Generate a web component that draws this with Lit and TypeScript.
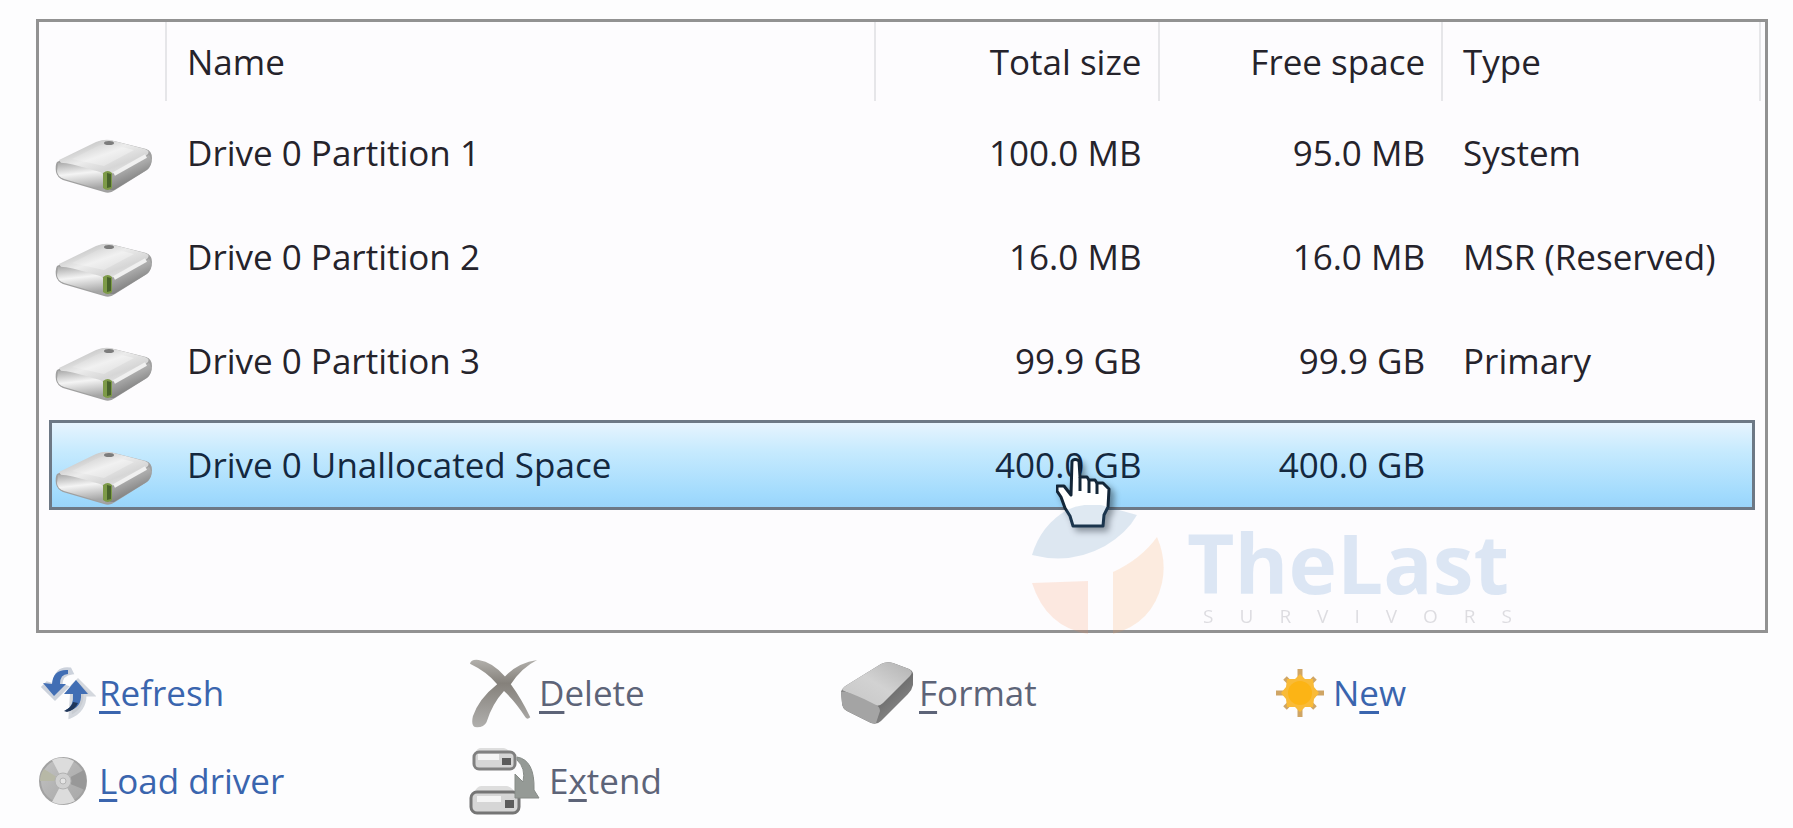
import { LitElement, html, css, svg, nothing } from "lit";
import { customElement, property } from "lit/decorators.js";

interface Partition {
  name: string;
  total: string;
  free: string;
  type: string;
  selected?: boolean;
}

const PARTITIONS: Partition[] = [
  { name: "Drive 0 Partition 1", total: "100.0 MB", free: "95.0 MB", type: "System" },
  { name: "Drive 0 Partition 2", total: "16.0 MB", free: "16.0 MB", type: "MSR (Reserved)" },
  { name: "Drive 0 Partition 3", total: "99.9 GB", free: "99.9 GB", type: "Primary" },
  { name: "Drive 0 Unallocated Space", total: "400.0 GB", free: "400.0 GB", type: "", selected: true },
];

const driveIcon = html`<svg class="drive" viewBox="0 0 100 56" width="100" height="56" aria-hidden="true">
  <defs>
    <linearGradient id="top" x1="0" y1="0" x2="1" y2="1">
      <stop offset="0" stop-color="#a9a9a9" /><stop offset=".45" stop-color="#ececec" />
      <stop offset=".7" stop-color="#d6d6d6" /><stop offset="1" stop-color="#f2f2f2" />
    </linearGradient>
    <linearGradient id="plate" x1="0" y1="0" x2="1" y2="1">
      <stop offset="0" stop-color="#c6c6c6" /><stop offset=".5" stop-color="#f1f1f1" /><stop offset="1" stop-color="#dadada" />
    </linearGradient>
    <linearGradient id="front" x1="0" y1="0" x2=".2" y2="1">
      <stop offset="0" stop-color="#a9a9a9" /><stop offset=".45" stop-color="#f4f4f4" /><stop offset="1" stop-color="#a6a6a6" />
    </linearGradient>
    <linearGradient id="side" x1="0" y1="0" x2=".5" y2="1">
      <stop offset="0" stop-color="#d0d0d0" /><stop offset=".5" stop-color="#a8a8a8" /><stop offset="1" stop-color="#6f6f6f" />
    </linearGradient>
  </defs>
  <path d="M3 24 Q1 27 2 34 Q3 39 9 42 L50 54 Q56 56 61 52 L93 32 Q98 28 98 20 Q98 13 92 11 L60 3 Q52 1 44 4 Z" fill="#a0a0a0" />
  <path d="M5 22 L42 4 Q52 0 60 3 L91 11 Q97 13 93 17 L60 35 Q53 37 46 35 L7 25 Z" fill="url(#top)" />
  <path d="M18 21 L44 8 Q52 5 60 7 L80 12 L50 28 Z" fill="url(#plate)" />
  <path d="M4 25 Q10 23 46 34 Q53 37 53 45 L51 53 L10 41 Q3 38 3 33 Z" fill="url(#front)" />
  <path d="M59 37 L95 17 Q98 21 97 25 Q96 30 91 33 L60 52 L56 52 Z" fill="url(#side)" />
  <path d="M60 36 L92 18" stroke="#f0f0f0" stroke-width="4" fill="none" />
  <path d="M49 35 Q54 31 58 35 L58 50 Q54 54 49 50 Z" fill="#7d9a48" />
  <path d="M53 35 L57 36 L57 49 L53 50 Z" fill="#47632a" />
  <ellipse cx="55" cy="5" rx="5" ry="2" fill="#7c7c7c" />
</svg>`;

const handCursor = html`<svg class="cursor" viewBox="0 0 56 72" width="56" height="72" aria-hidden="true">
  <path d="M16 4 Q19 1 23 4 L24 20 L31 20 L33 23 L39 23 L41 26 L47 26 L53 32 L52 50 L48 58 L47 69 L17 69 L14 59 L9 51 L5 40 L1 34 L1 29 L8 29 L15 38 Z"
    fill="#fff" stroke="#132638" stroke-width="3" stroke-linejoin="round" />
  <path d="M24 20 V34 M33 22 V36 M41 25 V37" stroke="#132638" stroke-width="3" fill="none" />
</svg>`;

const logo = html`<svg class="mark" viewBox="0 0 134 130" width="134" height="130" aria-hidden="true">
  <path d="M1 50 Q10 20 36 5 Q50 -2 70 0 L106 10 Q96 28 74 41 Q40 60 1 50 Z" fill="#4682b4" />
  <path d="M126 32 Q136 55 131 78 Q122 118 82 129 L82 67 Q110 54 126 32 Z" fill="#fb9c4e" />
  <path d="M1 78 L57 76 L57 129 Q15 122 1 78 Z" fill="#f98a55" />
</svg>`;

const icons: Record<string, unknown> = {
  refresh: svg`<svg viewBox="0 0 56 56" width="56" height="56" aria-hidden="true">
    <path d="M30 4 Q15 2 14 20 L7 18 L3 22 L15 34 L27 22 L21 20 Q21 9 32 8 Z" fill="#ccd2dc" stroke="#ccd2dc" stroke-width="3" />
    <path d="M30 52 Q45 46 45 30 L53 30 L38 15 L32 21 Z" fill="#c8ccd2" stroke="#d4d8de" stroke-width="3" />
    <path d="M28 5 Q13 4 12 19 L3 18 L14 31 L26 19 L20 19 Q20 9 28 9 Z" fill="#416eb4" />
    <path d="M26 45 Q34 41 33 29 L24 29 L36 15 L48 29 L41 29 Q42 43 28 46 Z" fill="#416eb4" />
    <path d="M24 46 Q32 42 33 37 L38 38 Q35 45 27 47 Z" fill="#1f3558" />
  </svg>`,
  disc: svg`<svg viewBox="0 0 50 50" width="50" height="50" aria-hidden="true">
    <defs><linearGradient id="disc" x1="0" y1="0" x2="1" y2="1">
      <stop offset="0" stop-color="#c4c4c4" /><stop offset=".5" stop-color="#b3b3b3" /><stop offset="1" stop-color="#a8a8a8" />
    </linearGradient></defs>
    <circle cx="25" cy="25" r="23" fill="url(#disc)" stroke="#a2a2a2" stroke-width="2" />
    <path d="M25 25 L14 4 Q25 -1 36 5 Z M25 25 L14 46 Q26 51 37 45 Z" fill="#dcdcdc" />
    <path d="M25 25 L46 14 Q50 24 47 34 Z" fill="#989898" />
    <path d="M25 25 L6 13 Q2 18 2 25 Z" fill="#b7b8a6" />
    <circle cx="25" cy="25" r="8" fill="#d0d0d0" stroke="#b2b2b2" />
    <circle cx="25" cy="25" r="3" fill="#e4e4e4" stroke="#b4b4b4" />
  </svg>`,
  cross: svg`<svg viewBox="0 0 72 72" width="72" height="72" aria-hidden="true">
    <defs><linearGradient id="cross" x1="0" y1="0" x2="0" y2="1">
      <stop offset="0" stop-color="#b2b0ac" /><stop offset=".35" stop-color="#85817b" /><stop offset="1" stop-color="#b0afad" />
    </linearGradient></defs>
    <path d="M1 6 Q2 1 10 2 Q24 4 37 19 Q50 5 70 2 Q54 10 43 27 Q54 42 63 61 Q60 64 58 61 Q48 45 36 34 Q24 47 18 66 Q15 72 6 71 Q2 69 4 60 Q10 42 29 27 Q18 14 1 6 Z" fill="url(#cross)" />
  </svg>`,
  eraser: svg`<svg viewBox="0 0 76 64" width="76" height="64" aria-hidden="true">
    <defs><linearGradient id="side2" x1="0" y1="0" x2="1" y2="1">
      <stop offset="0" stop-color="#888" /><stop offset=".5" stop-color="#666" /><stop offset="1" stop-color="#999" />
    </linearGradient>
    <linearGradient id="top2" x1="0" y1="1" x2="1" y2="0">
      <stop offset="0" stop-color="#c6c6c6" /><stop offset=".5" stop-color="#d2d2d2" /><stop offset="1" stop-color="#b2b2b2" />
    </linearGradient></defs>
    <path d="M2 31 Q3 27 8 24 L42 3 Q48 0 54 2 L70 8 Q75 10 74 16 L74 24 Q73 29 69 33 L42 60 Q38 64 32 62 L8 50 Q3 47 3 42 Z" fill="url(#side2)" />
    <path d="M3 29 Q4 26 8 24 L42 3 Q48 0 54 2 L70 8 Q75 11 71 15 L44 42 Q40 46 35 44 Z" fill="url(#top2)" />
    <path d="M2 31 Q6 28 35 43 Q41 45 41 50 L37 62 Q34 63 30 61 L8 50 Q3 47 3 42 Z" fill="#a4a4a4" />
  </svg>`,
  sun: svg`<svg viewBox="0 0 50 50" width="50" height="50" aria-hidden="true">
    <path d="M25 1 V49 M1 25 H49 M10 10 L40 40 M40 10 L10 40" stroke="#cfa565" stroke-width="5" />
    <path d="M25 6 L30 11 L38 11 L39 19 L44 25 L39 31 L38 39 L30 39 L25 44 L20 39 L12 39 L11 31 L6 25 L11 19 L12 11 L20 11 Z" fill="#f9bb38" />
    <circle cx="25" cy="25" r="12" fill="#fcb415" />
  </svg>`,
  extend: svg`<svg viewBox="0 0 72 70" width="72" height="70" aria-hidden="true">
    <path d="M6 7 Q8 2 12 2 H34 Q38 2 42 7 Z M4 48 Q8 40 12 40 H38 Q44 42 47 48 Z" fill="#dedede" />
    <rect x="5" y="6" width="41" height="17" rx="5" fill="#d6d6d6" stroke="#808080" stroke-width="3" />
    <rect x="2" y="46" width="48" height="21" rx="6" fill="#d6d6d6" stroke="#757575" stroke-width="3" />
    <path d="M9 11 H30 M8 53 H32" stroke="#f4f4f4" stroke-width="6" />
    <rect x="33" y="12" width="9" height="7" fill="#5c5c5c" /><rect x="36" y="54" width="9" height="8" fill="#5c5c5c" />
    <path d="M48 11 Q66 14 65 44 L70 52 H46 V28 L54 36 Q57 22 48 14 Z" fill="#959a96" stroke="#868b87" />
  </svg>`,
};

@customElement("disk-action")
export class DiskAction extends LitElement {
  @property() icon = "";
  @property() label = "";
  @property() key = "";
  @property({ type: Boolean }) disabled = false;

  static styles = css`
    :host { display: block; }
    button {
      display: flex;
      align-items: center;
      height: 72px;
      padding: 0;
      border: 0;
      background: none;
      font: inherit;
      white-space: pre;
      color: #3a65ae;
      cursor: pointer;
    }
    button:disabled { color: #5d6478; cursor: default; }
    .icon { display: flex; flex: none; box-sizing: border-box; }
    .refresh { width: 63px; padding-left: 4px; }
    .disc { width: 63px; padding-left: 2px; }
    .cross { width: 70px; }
    .eraser, .extend { width: 80px; }
    .sun { width: 58px; }
    u {
      text-decoration-thickness: 3px;
      text-underline-offset: 5px;
      text-decoration-skip-ink: none;
    }
  `;

  render() {
    const at = this.label.indexOf(this.key);
    return html`<button type="button" ?disabled=${this.disabled}>
      <span class="icon ${this.icon}">${icons[this.icon]}</span><span>${this.label.slice(0, at)}<u>${this.key}</u>${this.label.slice(at + 1)}</span>
    </button>`;
  }
}

@customElement("app-root")
export class AppRoot extends LitElement {
  static styles = css`
    :host {
      display: block;
      box-sizing: border-box;
      min-height: 100vh;
      padding: 19px 25px 0 36px;
      background: #fdfdfe;
      color: #25232b;
      font-family: "Open Sans", "Noto Sans", sans-serif;
      font-size: 35px;
      line-height: 48px;
    }
    .panel {
      position: relative;
      padding: 0 10px 120px;
      border: 3px solid #929292;
      background: #fdfcfe;
    }
    table, thead, tbody { display: block; }
    tr {
      display: grid;
      grid-template-columns: 118px 5fr 2fr 2fr 2.2fr;
    }
    th, td {
      display: flex;
      align-items: center;
      padding: 0 18px 0 20px;
      font-weight: 400;
      white-space: nowrap;
    }
    th { height: 79px; padding-right: 16px; border-right: 2px solid #e6e6e9; box-sizing: border-box; }
    th:last-child { margin-right: -6px; }
    .num { justify-content: flex-end; }
    tbody tr { height: 90px; margin-bottom: 14px; }
    tbody { padding-top: 7px; }
    tbody tr:last-child { margin-bottom: 0; }
    .glyph { align-items: flex-end; padding: 0 0 4px 5px; }
    .selected {
      background: linear-gradient(#eaf5fe, #c6eafe 35%, #a0dafd 85%, #98d2f8);
      box-shadow: inset 0 0 0 3px #6d7885;
      color: #14283f;
    }
    .target { position: relative; }
    .cursor {
      position: absolute;
      right: 48px;
      top: 37px;
      filter: drop-shadow(4px 4px 3px #0006);
    }
    .watermark {
      position: absolute;
      right: 253px;
      bottom: -5px;
      display: flex;
      gap: 22px;
      opacity: 0.17;
      pointer-events: none;
    }
    .wordmark { display: flex; flex-direction: column; padding-top: 15px; color: #3f7fc4; }
    .wordmark b { font-size: 82px; line-height: 84px; }
    .wordmark small {
      padding-left: 16px;
      font-size: 19px;
      line-height: 24px;
      letter-spacing: 26px;
      margin-right: -26px;
      color: #445;
    }
    .actions {
      display: grid;
      grid-template-columns: 433fr 370fr 436fr 493fr;
      row-gap: 16px;
      padding-top: 24px;
    }
  `;

  render() {
    return html`
      <section class="panel">
        <table>
          <thead>
            <tr>
              <th aria-label="Icon"></th>
              <th>Name</th>
              <th class="num">Total size</th>
              <th class="num">Free space</th>
              <th>Type</th>
            </tr>
          </thead>
          <tbody>
            ${PARTITIONS.map(
              (p) => html`<tr class=${p.selected ? "selected" : nothing}>
                <td class="glyph">${driveIcon}</td>
                <td>${p.name}</td>
                <td class="num target">${p.total}${p.selected ? handCursor : nothing}</td>
                <td class="num">${p.free}</td>
                <td>${p.type}</td>
              </tr>`,
            )}
          </tbody>
        </table>
        <div class="watermark">
          ${logo}
          <div class="wordmark"><b>TheLast</b><small>SURVIVORS</small></div>
        </div>
      </section>
      <nav class="actions">
        <disk-action icon="refresh" label="Refresh" key="R"></disk-action>
        <disk-action icon="cross" label="Delete" key="D" disabled></disk-action>
        <disk-action icon="eraser" label="Format" key="F" disabled></disk-action>
        <disk-action icon="sun" label="New" key="e"></disk-action>
        <disk-action icon="disc" label="Load driver" key="L"></disk-action>
        <disk-action icon="extend" label="Extend" key="x" disabled></disk-action>
      </nav>
    `;
  }
}
